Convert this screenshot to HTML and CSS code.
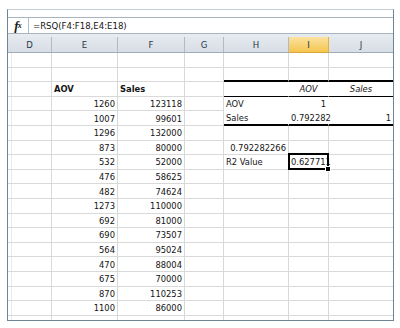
FILE: index.html
```html
<!DOCTYPE html>
<html lang="en">
<head>
<meta charset="UTF-8">
<title>RSQ</title>
<link rel="stylesheet" href="styles.css">
</head>
<body>

<div class="window">
    <div class="ribbon"></div>
    <div class="formula-bar">
        <div class="fx"><i>f</i><sub>x</sub></div>
        <div class="formula">=RSQ(F4:F18,E4:E18)</div>
    </div>
    <div class="gap"></div>
    <div class="sheet-wrap">
        <table class="sheet">
            <thead>
                <tr>
                    <th class="col-d">D</th>
                    <th class="col-e">E</th>
                    <th class="col-f">F</th>
                    <th class="col-g">G</th>
                    <th class="col-h">H</th>
                    <th class="col-i active">I</th>
                    <th class="col-j">J</th>
                </tr>
            </thead>
            <tbody>
                <tr><td></td><td></td><td></td><td></td><td></td><td></td><td></td></tr>
                <tr><td></td><td></td><td></td><td></td><td class="tb-top"></td><td class="tb-top"></td><td class="tb-top"></td></tr>
                <tr><td></td><td class="b">AOV</td><td class="b">Sales</td><td></td><td class="tb-head"></td><td class="tb-head it">AOV</td><td class="tb-head it">Sales</td></tr>
                <tr><td></td><td class="n">1260</td><td class="n">123118</td><td></td><td class="tb-row">AOV</td><td class="tb-row n">1</td><td class="tb-row"></td></tr>
                <tr><td></td><td class="n">1007</td><td class="n">99601</td><td></td><td class="tb-end">Sales</td><td class="tb-end n">0.792282</td><td class="tb-end n">1</td></tr>
                <tr><td></td><td class="n">1296</td><td class="n">132000</td><td></td><td></td><td></td><td></td></tr>
                <tr><td></td><td class="n">873</td><td class="n">80000</td><td></td><td class="n">0.792282266</td><td></td><td></td></tr>
                <tr><td></td><td class="n">532</td><td class="n">52000</td><td></td><td>R2 Value</td><td class="n selected">0.627711</td><td></td></tr>
                <tr><td></td><td class="n">476</td><td class="n">58625</td><td></td><td></td><td></td><td></td></tr>
                <tr><td></td><td class="n">482</td><td class="n">74624</td><td></td><td></td><td></td><td></td></tr>
                <tr><td></td><td class="n">1273</td><td class="n">110000</td><td></td><td></td><td></td><td></td></tr>
                <tr><td></td><td class="n">692</td><td class="n">81000</td><td></td><td></td><td></td><td></td></tr>
                <tr><td></td><td class="n">690</td><td class="n">73507</td><td></td><td></td><td></td><td></td></tr>
                <tr><td></td><td class="n">564</td><td class="n">95024</td><td></td><td></td><td></td><td></td></tr>
                <tr><td></td><td class="n">470</td><td class="n">88004</td><td></td><td></td><td></td><td></td></tr>
                <tr><td></td><td class="n">675</td><td class="n">70000</td><td></td><td></td><td></td><td></td></tr>
                <tr><td></td><td class="n">870</td><td class="n">110253</td><td></td><td></td><td></td><td></td></tr>
                <tr><td></td><td class="n">1100</td><td class="n">86000</td><td></td><td></td><td></td><td></td></tr>
                <tr><td></td><td></td><td></td><td></td><td></td><td></td><td></td></tr>
            </tbody>
        </table>
    </div>
</div>

</body>
</html>
```

FILE: styles.css
```css
body {
    margin: 0;
    background: #fff;
    font-family: "Liberation Sans Narrow", "DejaVu Sans Condensed", "Liberation Sans", sans-serif;
    color: #141414;
}
.window {
    box-sizing: border-box;
    width: 387px;
    height: 312px;
    margin: 9px 0 0 7px;
    border: 1px solid #718491;
    border-top-color: #c2ccd5;
    display: flex;
    flex-direction: column;
    overflow: hidden;
}
.ribbon {
    flex: none;
    height: 7px;
    background: #fff;
}
.formula-bar {
    flex: none;
    box-sizing: border-box;
    height: 17px;
    border-top: 1px solid #a8b4c0;
    border-bottom: 1px solid #a8b4c0;
    display: flex;
    align-items: center;
    background: #fff;
}
.fx {
    box-sizing: border-box;
    width: 21px;
    height: 100%;
    border-right: 1px solid #b4bfca;
    display: flex;
    align-items: center;
    justify-content: center;
    font-family: "Liberation Serif", serif;
    font-weight: bold;
    font-size: 13px;
    line-height: 1;
    color: #1a1a1a;
}
.fx sub {
    font-size: 8px;
    font-style: italic;
    vertical-align: -1px;
    margin-left: -1px;
}
.formula {
    padding-left: 4px;
    font-size: 9.5px;
}
.gap {
    flex: none;
    height: 3px;
    background: #e6ebf0;
}
.sheet-wrap {
    flex: 1;
    overflow: hidden;
}
.sheet {
    border-collapse: separate;
    border-spacing: 0;
    table-layout: fixed;
    width: 385px;
    font-size: 9.3px;
}
.sheet th, .sheet td {
    box-sizing: border-box;
    padding: 0 2px;
    border-right: 1px solid #d6d8da;
    border-bottom: 1px solid #d9d9d9;
    white-space: nowrap;
    overflow: visible;
    text-align: left;
}
.sheet th {
    height: 16px;
    font-weight: normal;
    font-size: 9.5px;
    text-align: center;
    color: #26364a;
    background: linear-gradient(#e4e9ee, #d8dee5);
    border-right-color: #afbac6;
    border-bottom-color: #9eabb8;
}
.sheet th.active {
    background: linear-gradient(#fbe2a0, #f5c64f);
    border-right-color: #e0b04a;
    border-bottom-color: #dba53a;
}
.col-d { width: 44px; }
.col-e { width: 66px; }
.col-f { width: 67px; }
.col-g { width: 39px; }
.col-h { width: 65px; }
.col-i { width: 40px; }
.col-j { width: 64px; }
.sheet tr > :last-child {
    border-right: none;
}
.sheet tbody tr {
    height: 14.6px;
}
.sheet td:first-child {
    background: linear-gradient(90deg, transparent 3px, #e7e9eb 3px, #e7e9eb 4px, transparent 4px);
}
.sheet td.n {
    text-align: right;
}
.sheet td.b {
    font-weight: bold;
}
.sheet td.it {
    font-style: italic;
    text-align: center;
}

/* correlation table */
.sheet td.tb-top {
    border-bottom: 2px solid #000;
}
.sheet td.tb-head {
    border-bottom: 1px solid #000;
    border-right-color: #fff;
}
.sheet td.tb-row {
    border-bottom-color: #fff;
    border-right-color: #fff;
}
.sheet td.tb-end {
    border-bottom: 2px solid #000;
    border-right-color: #fff;
}
.sheet tr > td.tb-head:last-child,
.sheet tr > td.tb-row:last-child,
.sheet tr > td.tb-end:last-child {
    border-right: none;
}

/* active cell */
.sheet td.selected {
    position: relative;
}
.sheet td.selected::after {
    content: "";
    position: absolute;
    top: -2px;
    left: -1px;
    right: -1px;
    bottom: -1px;
    border: 2px solid #000;
}
.sheet td.selected::before {
    content: "";
    position: absolute;
    right: -3px;
    bottom: -3px;
    width: 4px;
    height: 4px;
    background: #000;
    border: 1px solid #fff;
    z-index: 1;
}
```
